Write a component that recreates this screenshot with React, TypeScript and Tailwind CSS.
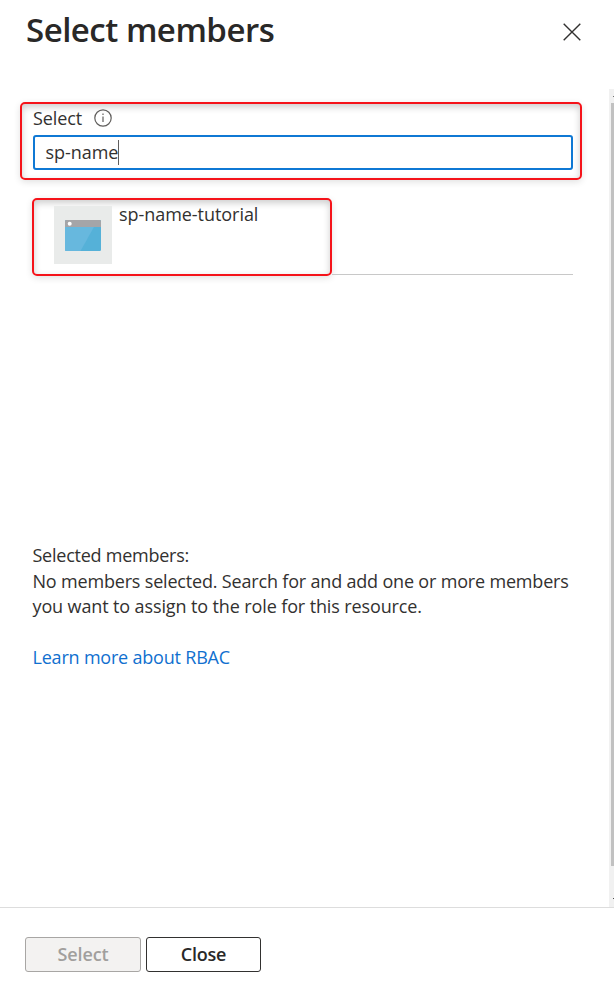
import React from "react";

function CloseIcon() {
  return (
    <svg width="18" height="18" viewBox="0 0 18 18" fill="none" stroke="#323130" strokeWidth="1.4">
      <path d="M0.7 0.7 17.3 17.3M17.3 0.7 0.7 17.3" />
    </svg>
  );
}

function InfoIcon() {
  return (
    <svg width="18" height="18" viewBox="0 0 18 18" fill="none" stroke="#605e5c" strokeWidth="1.2">
      <circle cx="9" cy="9" r="8.2" />
      <path d="M9 7.5v5.6M9 4.6v1.5" />
    </svg>
  );
}

function AppIcon() {
  return (
    <svg width="36" height="31" viewBox="0 0 36 31">
      <rect width="36" height="31" rx="1.2" fill="#55b1d8" />
      <path d="M0 6H29.5L15.5 31H1.2Q0 31 0 29.8Z" fill="#67b8de" />
      <path d="M1.2 0H34.8Q36 0 36 1.2V7H0V1.2Q0 0 1.2 0Z" fill="#a5a5a8" />
      <circle cx="4.7" cy="3.8" r="2" fill="#fff" />
    </svg>
  );
}

const highlight =
  "rounded-[5px] border-2 border-[#f5131a] shadow-[0_2px_7px_rgba(0,0,0,0.12),inset_0_3px_7px_rgba(0,0,0,0.2)]";

export default function App() {
  return (
    <div className="flex h-[1000px] w-[614px] flex-col overflow-hidden bg-white font-['Open_Sans','Noto_Sans',sans-serif] text-[18px] leading-[26px] text-[#323130]">
      <header className="flex h-[89px] shrink-0 items-start justify-between pr-[33px] pl-[26px]">
        <h1 className="mt-[9px] text-[33px] leading-[42px] font-semibold tracking-[-0.5px] whitespace-nowrap text-[#292827]">
          Select members
        </h1>
        <button aria-label="Close panel" className="mt-[23px]">
          <CloseIcon />
        </button>
      </header>

      <div className="flex h-[818px] shrink-0">
        <main className="flex w-[609px] flex-col pt-[13px] pl-[20px]">
          <section className={`h-[78px] w-[562px] px-[11px] ${highlight}`}>
            <div className="flex h-[31px] items-center pb-[4px]">
              <label className="w-[61px] tracking-[-0.1px]">Select</label>
              <InfoIcon />
            </div>
            <div className="flex h-[35px] w-[540px] items-center rounded-[3px] border-2 border-[#0f78d4] pl-[10.5px]">
              <span className="pb-[2px] tracking-[-0.05px]">sp-name</span>
              <span className="h-[25px] w-px bg-[#605e5c]" />
            </div>
          </section>

          <div className="mt-[18px] ml-[12px] flex w-[541px] items-end">
            <section className={`flex h-[78px] w-[300px] shrink-0 pt-[6px] pl-[20px] ${highlight}`}>
              <div className="flex h-[58px] w-[58px] items-center justify-center bg-[#e9ebea]">
                <AppIcon />
              </div>
              <span className="mt-[-5px] ml-[7px] h-[26px] tracking-[-0.05px]">sp-name-tutorial</span>
            </section>
            <div className="mb-px h-px grow bg-[#c8c8c8]" />
          </div>

          <section className="mt-[267px] ml-[12.5px] leading-[25.6px] whitespace-nowrap">
            <p className="tracking-[-0.25px]">Selected members:</p>
            <p className="tracking-[-0.18px]">No members selected. Search for and add one or more members</p>
            <p className="tracking-[-0.12px]">you want to assign to the role for this resource.</p>
            <a className="mt-[25px] block tracking-[-0.2px] text-[#1070cf]">Learn more about RBAC</a>
          </section>
        </main>

        <div className="flex w-[5px] flex-col bg-[#f1f1f1] pl-[2px]">
          <div className="flex h-[14px] items-center justify-end">
            <span className="h-px w-px bg-[#707070]" />
          </div>
          <div className="h-[763px] bg-[#c1c1c1]" />
          <div className="mt-[32px] h-px w-px self-end bg-[#505050]" />
        </div>
      </div>

      <footer className="flex h-[93px] shrink-0 gap-[5px] border-t border-[#dddddd] pt-[29px] pl-[25px]">
        <button className="h-[35px] w-[116px] rounded-[3px] border border-[#a8a6a4] bg-[#f3f2f1] pb-[2px] font-semibold tracking-[-0.1px] text-[#a19f9d]">
          Select
        </button>
        <button className="h-[35px] w-[115px] rounded-[3px] border border-[#323130] bg-white pb-[2px] font-semibold tracking-[-0.2px] text-[#292827]">
          Close
        </button>
      </footer>
    </div>
  );
}
